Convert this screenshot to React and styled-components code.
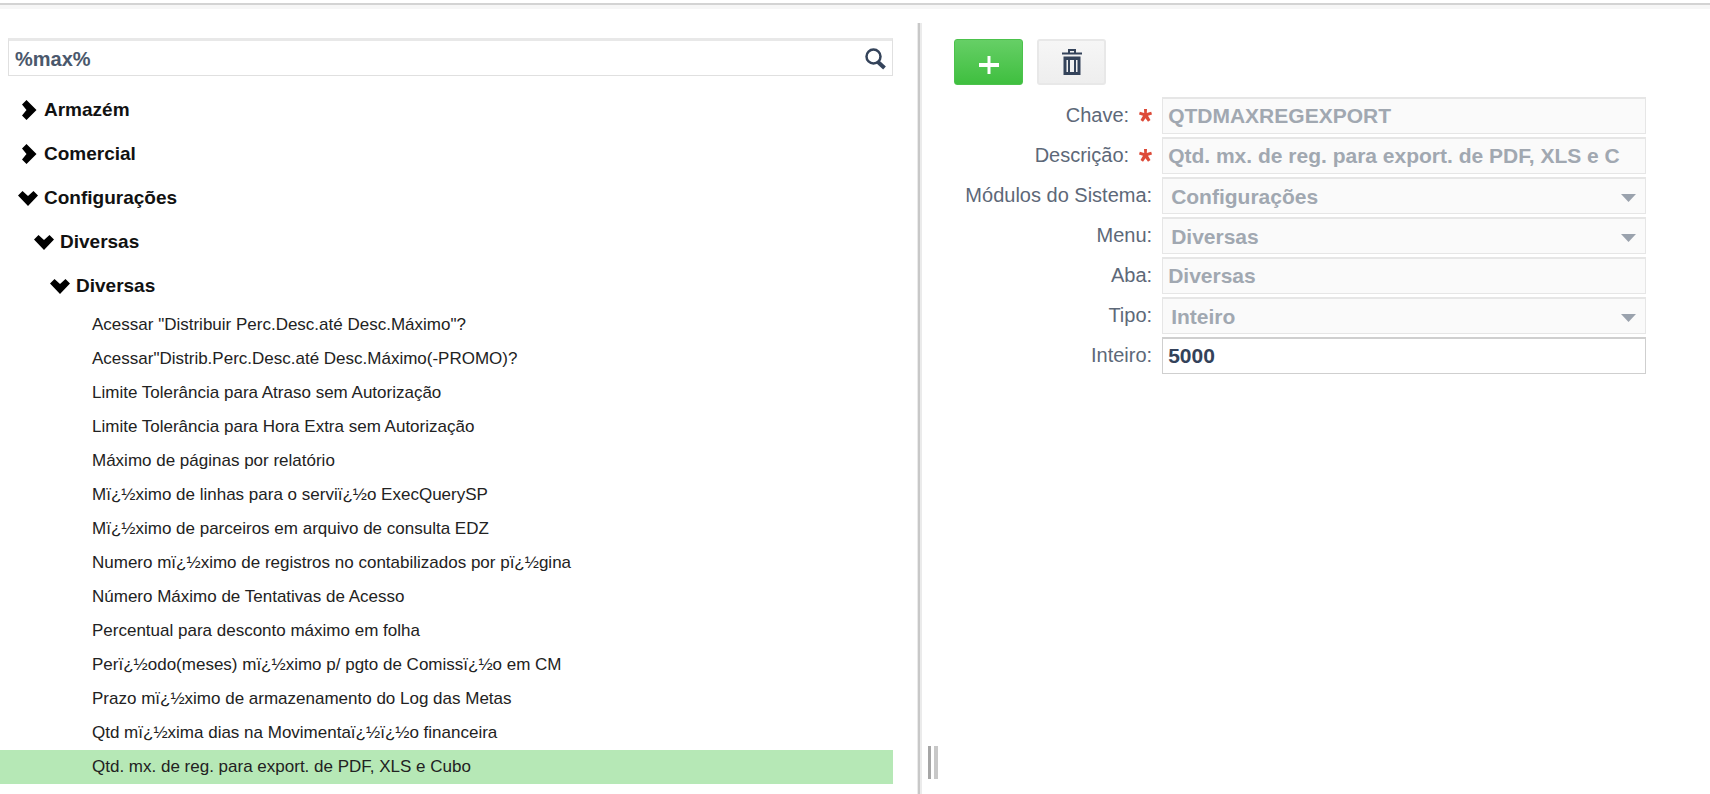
import React, { useState } from "react";
import styled, { createGlobalStyle } from "styled-components";

const GlobalStyle = createGlobalStyle`
  * {
    box-sizing: border-box;
  }
  body {
    margin: 0;
    background: #fff;
    font-family: "Liberation Sans", Arial, sans-serif;
  }
`;

const Page = styled.div`
  height: 100vh;
  display: flex;
  flex-direction: column;
  overflow: hidden;
`;

const TopLine = styled.div`
  flex: none;
  height: 7px;
  padding-top: 3px;
  &::before {
    content: "";
    display: block;
    height: 4px;
    background: #f6f6f6;
    border-top: 2px solid #d3d3d3;
  }
`;

const Content = styled.main`
  flex: 1;
  min-height: 0;
  padding-top: 16px;
  display: grid;
  grid-template-columns: minmax(0, 43fr) minmax(0, 37fr);
`;

const TreePane = styled.section`
  min-height: 0;
  overflow: hidden;
  padding: 15px 26px 0 0;
`;

const SearchBox = styled.div`
  display: flex;
  align-items: center;
  height: 38px;
  margin: 0 0 12px 8px;
  border: 1px solid #e0e0e0;
  border-top: 3px solid #e8e8e8;
`;

const SearchInput = styled.input`
  flex: 1;
  min-width: 0;
  border: 0;
  outline: 0;
  padding: 2px 6px 0;
  background: transparent;
  font: bold 20px "Liberation Sans", Arial, sans-serif;
  color: #4a586c;
`;

const SearchButton = styled.button`
  display: flex;
  border: 0;
  padding: 2px 6px 0 0;
  background: none;
  cursor: pointer;
`;

const TreeList = styled.ul`
  list-style: none;
  margin: 0;
  padding: 0;
`;

const TreeNode = styled.button`
  display: flex;
  align-items: center;
  gap: 6px;
  width: 100%;
  height: 44px;
  border: 0;
  padding: 0 0 0 ${(props) => 18 + props.$level * 16}px;
  background: none;
  font: bold 19px "Liberation Sans", Arial, sans-serif;
  color: #111;
  cursor: pointer;
`;

const Leaf = styled.li`
  height: 34px;
  line-height: 34px;
  padding-left: 92px;
  font-size: 17px;
  white-space: nowrap;
  color: #222;
  cursor: pointer;
  background: ${(props) => (props.$selected ? "#b6e8b6" : "transparent")};
`;

const DetailPane = styled.section`
  display: flex;
  min-height: 0;
`;

const Splitter = styled.div`
  flex: none;
  width: 5px;
  margin-left: -2px;
  background: #c8c8c8;
  border: solid #ebebeb;
  border-width: 0 2px 0 1px;
`;

const Grip = styled.div`
  flex: none;
  align-self: flex-end;
  width: 10px;
  height: 33px;
  margin: 0 0 15px 6px;
  border-left: 3px solid #a6a6a6;
  border-right: 4px solid #c8c8c8;
`;

const Detail = styled.div`
  flex: 1;
  min-width: 0;
  padding: 16px 64px 0 16px;
`;

const Toolbar = styled.div`
  display: flex;
  gap: 14px;
  margin-bottom: 12px;
`;

const ToolButton = styled.button`
  display: flex;
  align-items: center;
  justify-content: center;
  width: 69px;
  height: 46px;
  padding: ${(props) => (props.$primary ? "5px 0 0" : "0")};
  border-radius: 3px;
  border: ${(props) => (props.$primary ? "1px solid #4cc24c" : "2px solid #e8e8e8")};
  background: ${(props) =>
    props.$primary
      ? "linear-gradient(#66cf66, #3fbf3f)"
      : "linear-gradient(#f6f6f6, #eeeeee)"};
  cursor: pointer;
`;

const Form = styled.form`
  display: grid;
  grid-template-columns: 208px minmax(0, 1fr);
  row-gap: 3px;
`;

const Label = styled.label`
  display: flex;
  align-items: center;
  justify-content: flex-end;
  gap: 10px;
  padding-right: 10px;
  font-size: 20px;
  white-space: nowrap;
  color: #5d6878;
`;

const Field = styled.input`
  width: 100%;
  height: 37px;
  padding: 0 5px;
  border: 1px solid #cfcfcf;
  border-top-width: 2px;
  border-radius: 0;
  background: #fff;
  font: bold 21px "Liberation Sans", Arial, sans-serif;
  color: #33425a;
  &:disabled {
    border-color: #e6e6e6;
    background: #fafafa;
    color: #a1a8b1;
  }
`;

const SelectWrap = styled.div`
  position: relative;
`;

const Select = styled(Field).attrs({ as: "select" })`
  display: block;
  appearance: none;
  padding: 0 40px 0 8px;
  &:disabled {
    opacity: 1;
  }
`;

const Arrow = styled.svg`
  position: absolute;
  right: 10px;
  top: 17px;
  pointer-events: none;
`;

const items = [
  'Acessar "Distribuir Perc.Desc.até Desc.Máximo"?',
  'Acessar"Distrib.Perc.Desc.até Desc.Máximo(-PROMO)?',
  "Limite Tolerância para Atraso sem Autorização",
  "Limite Tolerância para Hora Extra sem Autorização",
  "Máximo de páginas por relatório",
  "Mï¿½ximo de linhas para o serviï¿½o ExecQuerySP",
  "Mï¿½ximo de parceiros em arquivo de consulta EDZ",
  "Numero mï¿½ximo de registros no contabilizados por pï¿½gina",
  "Número Máximo de Tentativas de Acesso",
  "Percentual para desconto máximo em folha",
  "Perï¿½odo(meses) mï¿½ximo p/ pgto de Comissï¿½o em CM",
  "Prazo mï¿½ximo de armazenamento do Log das Metas",
  "Qtd mï¿½xima dias na Movimentaï¿½ï¿½o financeira",
  "Qtd. mx. de reg. para export. de PDF, XLS e Cubo",
  "Qtd. Máxima",
];

const nodes = [
  { text: "Armazém", level: 0, open: false },
  { text: "Comercial", level: 0, open: false },
  { text: "Configurações", level: 0, open: true },
  { text: "Diversas", level: 1, open: true },
  { text: "Diversas", level: 2, open: true },
];

const fields = [
  { id: "chave", label: "Chave", value: "QTDMAXREGEXPORT", required: true, disabled: true },
  {
    id: "descricao",
    label: "Descrição",
    value: "Qtd. mx. de reg. para export. de PDF, XLS e C",
    required: true,
    disabled: true,
  },
  { id: "modulo", label: "Módulos do Sistema", value: "Configurações", select: true, disabled: true },
  { id: "menu", label: "Menu", value: "Diversas", select: true, disabled: true },
  { id: "aba", label: "Aba", value: "Diversas", disabled: true },
  { id: "tipo", label: "Tipo", value: "Inteiro", select: true, disabled: true },
  { id: "inteiro", label: "Inteiro", value: "5000" },
];

const Chevron = ({ open }) => (
  <svg width="20" height="20" viewBox="0 0 20 20" fill="#000">
    {open ? (
      <path d="M4.500 3 10 8 15.500 3 20 7.500 10 18 0 7.500Z" />
    ) : (
      <path d="M8.500 0 18.500 10 8.500 20 4 15.500 8.500 10 4 4.500Z" />
    )}
  </svg>
);

const App = () => {
  const [selected, setSelected] = useState(13);

  return (
    <Page>
      <GlobalStyle />
      <TopLine />
      <Content>
        <TreePane>
          <SearchBox>
            <SearchInput aria-label="Pesquisar" defaultValue="%max%" />
            <SearchButton type="button" aria-label="Pesquisar">
              <svg width="22" height="22" viewBox="0 0 22 22" fill="none" stroke="#34435a">
                <circle cx="9.500" cy="8.500" r="7" strokeWidth="2.500" />
                <path d="M14 14 20.500 20" strokeWidth="4" />
              </svg>
            </SearchButton>
          </SearchBox>
          {nodes.map((node, i) => (
            <TreeNode key={i} type="button" $level={node.level} aria-expanded={node.open}>
              <Chevron open={node.open} />
              {node.text}
            </TreeNode>
          ))}
          <TreeList>
            {items.map((item, i) => (
              <Leaf key={item} $selected={i === selected} onClick={() => setSelected(i)}>
                {item}
              </Leaf>
            ))}
          </TreeList>
        </TreePane>

        <DetailPane>
          <Splitter />
          <Grip />
          <Detail>
            <Toolbar>
              <ToolButton type="button" $primary aria-label="Adicionar">
                <svg width="20" height="20" viewBox="0 0 20 20" stroke="#fff">
                  <path d="M10 1V19" strokeWidth="3" />
                  <path d="M0 10H20" strokeWidth="4" />
                </svg>
              </ToolButton>
              <ToolButton type="button" aria-label="Excluir">
                <svg width="20" height="26" viewBox="0 0 20 26" fill="#34435a">
                  <path d="M0 3.500H6V0H14V3.500H20V5.500H0ZM8 2V3.500H12V2Z" fillRule="evenodd" />
                  <path d="M1.500 7.500H18.500V26H1.500ZM4.500 11V23H6V11ZM8 11V23H12V11ZM14 11V23H15.500V11Z" fillRule="evenodd" />
                </svg>
              </ToolButton>
            </Toolbar>
            <Form>
              {fields.map((f) => (
                <React.Fragment key={f.id}>
                  <Label htmlFor={f.id}>
                    {f.label}:
                    {f.required && (
                      <svg width="13" height="13" viewBox="0 0 13 13" fill="#dd4b39">
                        <path d="M5 0H8L7.800 4 12.200 2.800 13 5.500 9 6.800 11.500 11 9 12.800 6.500 9.200 4 12.800 1.500 11 4 6.800 0 5.500 0.800 2.800 5.200 4Z" />
                      </svg>
                    )}
                  </Label>
                  {f.select ? (
                    <SelectWrap>
                      <Select id={f.id} disabled={f.disabled}>
                        <option>{f.value}</option>
                      </Select>
                      <Arrow width="15" height="8" viewBox="0 0 15 8" fill="#9aa2ad">
                        <path d="M0 0H15L7.500 8Z" />
                      </Arrow>
                    </SelectWrap>
                  ) : (
                    <Field id={f.id} defaultValue={f.value} disabled={f.disabled} />
                  )}
                </React.Fragment>
              ))}
            </Form>
          </Detail>
        </DetailPane>
      </Content>
    </Page>
  );
};

export default App;
